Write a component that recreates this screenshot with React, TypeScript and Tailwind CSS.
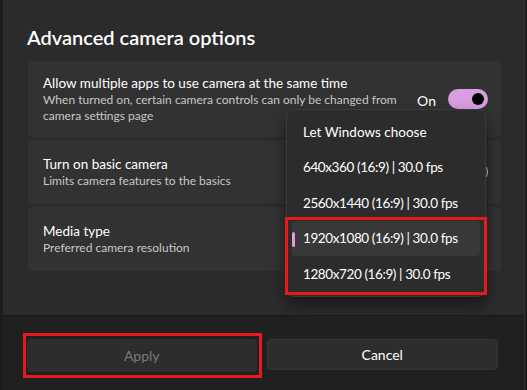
import React from 'react';

const font = { fontFamily: 'Lato, "Noto Sans", sans-serif' };

function Toggle({ on }: { on: boolean }) {
    return on ? (
        <div className="w-[40px] h-[20px] rounded-full bg-[#d99de0] flex items-center justify-end pr-[4px]">
            <div className="w-[12px] h-[12px] rounded-full bg-black" />
        </div>
    ) : (
        <div className="w-[40px] h-[20px] rounded-full border border-[#cfcfcf] flex items-center pl-[4px]">
            <div className="w-[12px] h-[12px] rounded-full bg-[#cfcfcf]" />
        </div>
    );
}

const options = [
    'Let Windows choose',
    '640x360 (16:9) | 30.0 fps',
    '2560x1440 (16:9) | 30.0 fps',
    '1920x1080 (16:9) | 30.0 fps',
    '1280x720 (16:9) | 30.0 fps',
];

export default function App() {
    return (
        <div className="w-[527px] h-[390px] bg-[#1c1c1c] overflow-hidden relative text-white" style={font}>
            <div className="ml-[3px] w-[522px] h-full bg-[#2b2b2b] border-r border-[#333] flex flex-col">
                {/* Body */}
                <div className="flex-1 flex flex-col">
                    <h1 className="pl-6 pt-[24px] text-[20px] leading-[26px] font-semibold">Advanced camera options</h1>
                    <div className="ml-[25px] w-[473px] mt-[11px] flex flex-col gap-[3px]">
                        <div className="h-[76px] rounded-[4px] bg-[#323232] pl-[15px] pr-[13px] flex items-center">
                            <div className="flex-1">
                                <div className="text-[13.5px] leading-[18px]">Allow multiple apps to use camera at the same time</div>
                                <div className="text-[12px] leading-[16px] text-[#c8c8c8] w-[360px]">
                                    When turned on, certain camera controls can only be changed from camera settings page
                                </div>
                            </div>
                            <span className="text-[14px] mr-[12px] mt-[2px]">On</span>
                            <Toggle on />
                        </div>
                        <div className="h-[64px] rounded-[4px] bg-[#323232] pl-[15px] pr-[13px] flex items-center">
                            <div className="flex-1">
                                <div className="text-[13.5px] leading-[18px]">Turn on basic camera</div>
                                <div className="text-[12px] leading-[16px] text-[#c8c8c8]">Limits camera features to the basics</div>
                            </div>
                            <Toggle on={false} />
                        </div>
                        <div className="h-[64px] rounded-[4px] bg-[#323232] pl-[15px] pr-[13px] flex items-center">
                            <div className="flex-1">
                                <div className="text-[13.5px] leading-[18px]">Media type</div>
                                <div className="text-[12px] leading-[16px] text-[#c8c8c8]">Preferred camera resolution</div>
                            </div>
                        </div>
                    </div>
                </div>
                {/* Footer */}
                <div className="h-[75px] bg-[#202020] border-t border-[#1a1a1a] flex items-start gap-[10px] pl-[24px] pr-[26px] pt-[23px]">
                    <button className="flex-1 h-[33px] rounded-[4px] bg-[#2d2d2d] text-[14px] text-[#7a7a7a]">Apply</button>
                    <button className="flex-1 h-[31px] rounded-[4px] bg-[#2d2d2d] border border-[#353535] text-[14px] text-white">Cancel</button>
                </div>
            </div>

            {/* Apply highlight */}
            <div className="absolute left-[23px] top-[333px] w-[239px] h-[45px] border-[3px] border-[#e8191c] pointer-events-none" />

            {/* Dropdown */}
            <div className="absolute left-[286px] top-[109px] w-[200px] h-[188px] rounded-[8px] bg-[#2c2c2c] border border-[#3a3a3a] shadow-[0_8px_16px_rgba(0,0,0,0.45)] py-[4px] px-[5px] flex flex-col">
                {options.map((o, i) => (
                    <div
                        key={o}
                        className={
                            'relative h-[36px] rounded-[4px] flex items-center pl-[11px] text-[13.5px] whitespace-nowrap ' +
                            (i === 0 ? '' : 'tracking-[-0.4px] ') +
                            (i === 3 ? 'bg-[#383838]' : '')
                        }
                    >
                        {i === 3 && <div className="absolute left-0 top-[11px] w-[3px] h-[15px] rounded-full bg-[#d99de0]" />}
                        {o}
                    </div>
                ))}
            </div>

            {/* Options highlight */}
            <div className="absolute left-[285px] top-[217px] w-[202px] h-[78px] border-[3px] border-[#e8191c] pointer-events-none" />
        </div>
    );
}
